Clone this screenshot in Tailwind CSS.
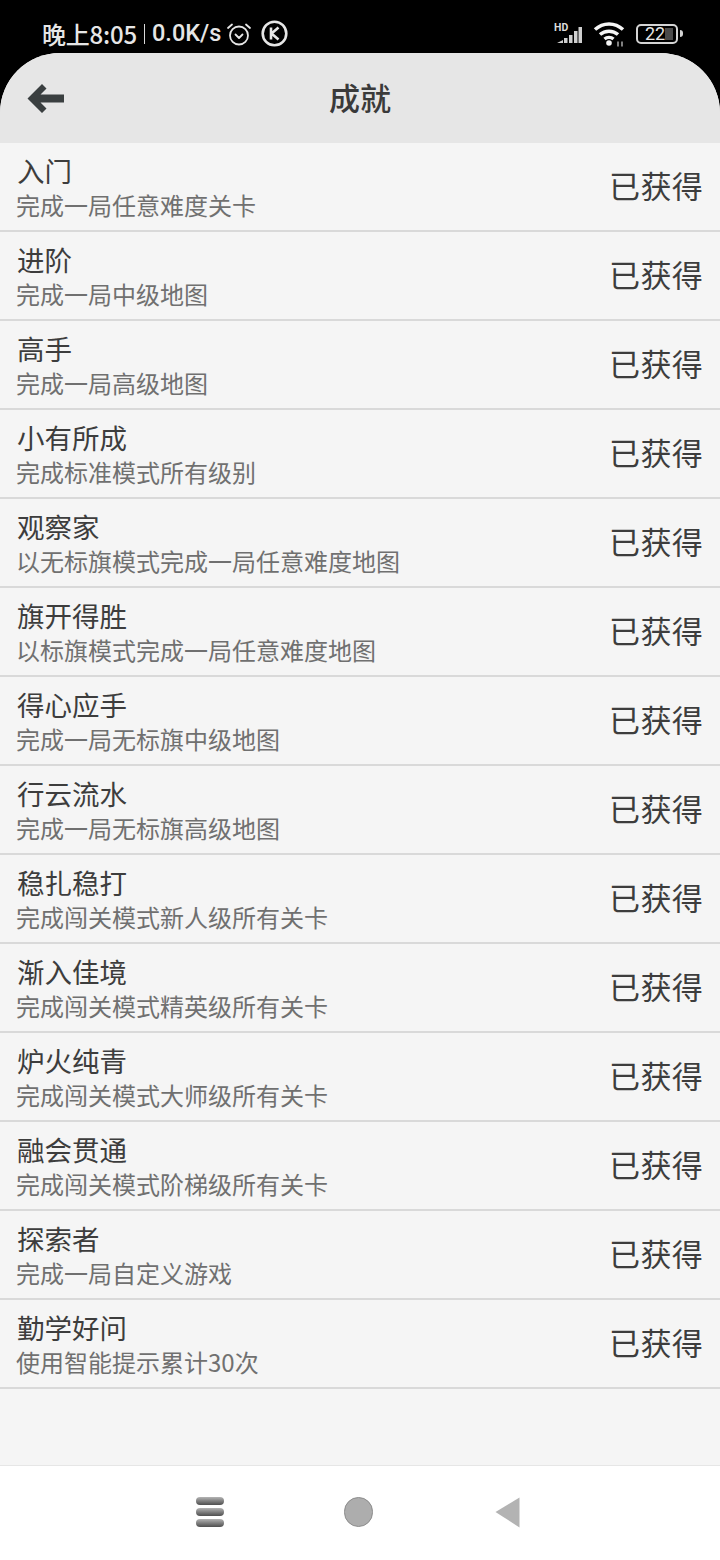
<!DOCTYPE html>
<html lang="zh">
<head>
    <meta charset="UTF-8">
    <meta name="viewport" content="width=device-width, initial-scale=1.0">
    <title>成就</title>
    <script src="https://cdn.jsdelivr.net/npm/@tailwindcss/browser@4"></script>
</head>
<body class="w-[720px] h-[1560px] overflow-hidden bg-black font-['Roboto','Noto_Sans_CJK_SC',sans-serif]">
    <!-- status bar -->
    <div class="h-[53px] flex items-center justify-between pl-[42px] pr-[37px] pt-[14px] text-[#e6e6e6]">
        <div class="flex items-center text-[23.500px] leading-none">
            <span class="font-['Noto_Sans_CJK_SC',sans-serif] text-[24px] tracking-[-0.2px] font-medium">晚上8:05</span>
            <span class="w-px h-[20px] bg-[#d8d8d8] ml-[7px] mr-[7px]"></span>
            <span class="font-medium">0.0K/s</span>
            <svg class="ml-[5px]" width="26" height="24" viewBox="0 0 26 24" fill="none" stroke="#e6e6e6" stroke-width="1.800" stroke-linecap="round" stroke-linejoin="round">
                <circle cx="13" cy="13.500" r="9"/>
                <path d="M9.500 12.500l3.500 3.500 3.500-3.500"/>
                <path d="M2 6l4-3.500M24 6l-4-3.500"/>
            </svg>
            <svg class="ml-[9px]" width="27" height="27" viewBox="0 0 27 27" fill="none" stroke="#e6e6e6">
                <circle cx="13.500" cy="13.500" r="11.800" stroke-width="2.600"/>
                <path d="M10 7.500v12M17.500 7.500l-7 6 7 6" stroke-width="2.600"/>
            </svg>
        </div>
        <div class="flex items-center">
            <svg width="30" height="24" viewBox="0 0 30 24">
                <text x="0" y="9" font-size="10.500" font-weight="700" font-family="Roboto" fill="#dcdcdc">HD</text>
                <path d="M3 21l6-3v3zM10 16h3.500v5H10zM15 13h3.500v8H15zM20 9h3.500v12H20zM24.500 5H28v16h-3.500z" fill="#cfcfcf"/>
            </svg>
            <svg class="ml-[9px]" width="34" height="26" viewBox="0 0 34 26" fill="none" stroke="#f5f5f5" stroke-width="3.500">
                <path d="M2 8.500C10 1 22 1 30 8.500"/>
                <path d="M7 13.500C12 9 20 9 25 13.500"/>
                <path d="M11.500 18C14 16 18 16 20.500 18"/>
                <circle cx="16" cy="22" r="2.800" fill="#f5f5f5" stroke="none"/>
                <path d="M25 20.500v5M29 20.500v5" stroke-width="1.300" stroke="#c4c4c4"/>
            </svg>
            <div class="ml-[9px] flex items-center">
                <div class="relative w-[42px] h-[20px] rounded-[5px] border-2 border-[#d4d4d4] flex items-center justify-center text-[18px] leading-none text-[#e6e6e6]">
                    <span class="absolute right-[3px] top-[2px] bottom-[2px] w-[8px] bg-[#4a4a4a]"></span>
                    <span class="relative -ml-[4px]">22</span>
                </div>
                <span class="ml-[2px] w-[3px] h-[7px] rounded-r-sm bg-[#d4d4d4]"></span>
            </div>
        </div>
    </div>

    <!-- page -->
    <div class="h-[1412px] rounded-t-[60px] bg-[#f5f5f5] overflow-hidden">
        <header class="relative h-[90px] bg-[#e6e6e6] flex items-center justify-center">
            <svg class="absolute left-[27px] top-[31px]" width="38" height="29" viewBox="0 0 38 29" fill="#3a3f40">
                <path d="M15 0l4.500 4.500-6 6H37v8H13.500l6 6-4.500 4.500L.500 14.500z"/>
            </svg>
            <h1 class="text-[31px] leading-none font-medium text-[#3a3a3a] font-['Noto_Sans_CJK_SC',sans-serif] -mt-[3px]">成就</h1>
        </header>
        <ul class="font-['Noto_Sans_CJK_SC',sans-serif]">
            <li class="h-[89px] border-b-2 border-[#d9d9d9] flex items-center justify-between pl-[16px] pr-[17px]">
                <div><p class="pl-px text-[27.500px] leading-[36px] text-[#3d3d3d]">入门</p><p class="text-[24px] leading-[34px] text-[#707070]">完成一局任意难度关卡</p></div>
                <span class="text-[31px] tracking-[0.3px] -mt-[2px] text-[#3d3d3d]">已获得</span>
            </li>
            <li class="h-[89px] border-b-2 border-[#d9d9d9] flex items-center justify-between pl-[16px] pr-[17px]">
                <div><p class="pl-px text-[27.500px] leading-[36px] text-[#3d3d3d]">进阶</p><p class="text-[24px] leading-[34px] text-[#707070]">完成一局中级地图</p></div>
                <span class="text-[31px] tracking-[0.3px] -mt-[2px] text-[#3d3d3d]">已获得</span>
            </li>
            <li class="h-[89px] border-b-2 border-[#d9d9d9] flex items-center justify-between pl-[16px] pr-[17px]">
                <div><p class="pl-px text-[27.500px] leading-[36px] text-[#3d3d3d]">高手</p><p class="text-[24px] leading-[34px] text-[#707070]">完成一局高级地图</p></div>
                <span class="text-[31px] tracking-[0.3px] -mt-[2px] text-[#3d3d3d]">已获得</span>
            </li>
            <li class="h-[89px] border-b-2 border-[#d9d9d9] flex items-center justify-between pl-[16px] pr-[17px]">
                <div><p class="pl-px text-[27.500px] leading-[36px] text-[#3d3d3d]">小有所成</p><p class="text-[24px] leading-[34px] text-[#707070]">完成标准模式所有级别</p></div>
                <span class="text-[31px] tracking-[0.3px] -mt-[2px] text-[#3d3d3d]">已获得</span>
            </li>
            <li class="h-[89px] border-b-2 border-[#d9d9d9] flex items-center justify-between pl-[16px] pr-[17px]">
                <div><p class="pl-px text-[27.500px] leading-[36px] text-[#3d3d3d]">观察家</p><p class="text-[24px] leading-[34px] text-[#707070]">以无标旗模式完成一局任意难度地图</p></div>
                <span class="text-[31px] tracking-[0.3px] -mt-[2px] text-[#3d3d3d]">已获得</span>
            </li>
            <li class="h-[89px] border-b-2 border-[#d9d9d9] flex items-center justify-between pl-[16px] pr-[17px]">
                <div><p class="pl-px text-[27.500px] leading-[36px] text-[#3d3d3d]">旗开得胜</p><p class="text-[24px] leading-[34px] text-[#707070]">以标旗模式完成一局任意难度地图</p></div>
                <span class="text-[31px] tracking-[0.3px] -mt-[2px] text-[#3d3d3d]">已获得</span>
            </li>
            <li class="h-[89px] border-b-2 border-[#d9d9d9] flex items-center justify-between pl-[16px] pr-[17px]">
                <div><p class="pl-px text-[27.500px] leading-[36px] text-[#3d3d3d]">得心应手</p><p class="text-[24px] leading-[34px] text-[#707070]">完成一局无标旗中级地图</p></div>
                <span class="text-[31px] tracking-[0.3px] -mt-[2px] text-[#3d3d3d]">已获得</span>
            </li>
            <li class="h-[89px] border-b-2 border-[#d9d9d9] flex items-center justify-between pl-[16px] pr-[17px]">
                <div><p class="pl-px text-[27.500px] leading-[36px] text-[#3d3d3d]">行云流水</p><p class="text-[24px] leading-[34px] text-[#707070]">完成一局无标旗高级地图</p></div>
                <span class="text-[31px] tracking-[0.3px] -mt-[2px] text-[#3d3d3d]">已获得</span>
            </li>
            <li class="h-[89px] border-b-2 border-[#d9d9d9] flex items-center justify-between pl-[16px] pr-[17px]">
                <div><p class="pl-px text-[27.500px] leading-[36px] text-[#3d3d3d]">稳扎稳打</p><p class="text-[24px] leading-[34px] text-[#707070]">完成闯关模式新人级所有关卡</p></div>
                <span class="text-[31px] tracking-[0.3px] -mt-[2px] text-[#3d3d3d]">已获得</span>
            </li>
            <li class="h-[89px] border-b-2 border-[#d9d9d9] flex items-center justify-between pl-[16px] pr-[17px]">
                <div><p class="pl-px text-[27.500px] leading-[36px] text-[#3d3d3d]">渐入佳境</p><p class="text-[24px] leading-[34px] text-[#707070]">完成闯关模式精英级所有关卡</p></div>
                <span class="text-[31px] tracking-[0.3px] -mt-[2px] text-[#3d3d3d]">已获得</span>
            </li>
            <li class="h-[89px] border-b-2 border-[#d9d9d9] flex items-center justify-between pl-[16px] pr-[17px]">
                <div><p class="pl-px text-[27.500px] leading-[36px] text-[#3d3d3d]">炉火纯青</p><p class="text-[24px] leading-[34px] text-[#707070]">完成闯关模式大师级所有关卡</p></div>
                <span class="text-[31px] tracking-[0.3px] -mt-[2px] text-[#3d3d3d]">已获得</span>
            </li>
            <li class="h-[89px] border-b-2 border-[#d9d9d9] flex items-center justify-between pl-[16px] pr-[17px]">
                <div><p class="pl-px text-[27.500px] leading-[36px] text-[#3d3d3d]">融会贯通</p><p class="text-[24px] leading-[34px] text-[#707070]">完成闯关模式阶梯级所有关卡</p></div>
                <span class="text-[31px] tracking-[0.3px] -mt-[2px] text-[#3d3d3d]">已获得</span>
            </li>
            <li class="h-[89px] border-b-2 border-[#d9d9d9] flex items-center justify-between pl-[16px] pr-[17px]">
                <div><p class="pl-px text-[27.500px] leading-[36px] text-[#3d3d3d]">探索者</p><p class="text-[24px] leading-[34px] text-[#707070]">完成一局自定义游戏</p></div>
                <span class="text-[31px] tracking-[0.3px] -mt-[2px] text-[#3d3d3d]">已获得</span>
            </li>
            <li class="h-[89px] border-b-2 border-[#d9d9d9] flex items-center justify-between pl-[16px] pr-[17px]">
                <div><p class="pl-px text-[27.500px] leading-[36px] text-[#3d3d3d]">勤学好问</p><p class="text-[24px] leading-[34px] text-[#707070]">使用智能提示累计30次</p></div>
                <span class="text-[31px] tracking-[0.3px] -mt-[2px] text-[#3d3d3d]">已获得</span>
            </li>
        </ul>
    </div>

    <!-- nav bar -->
    <nav class="h-[95px] bg-white border-t border-[#e6e6e6] relative">
        <div class="absolute left-[196px] top-[31px] w-[28px] flex flex-col gap-[3px]">
            <span class="h-[8px] rounded-full bg-gradient-to-b from-[#b5b5b5] to-[#4f4f4f]"></span>
            <span class="h-[8px] rounded-full bg-gradient-to-b from-[#b5b5b5] to-[#4f4f4f]"></span>
            <span class="h-[8px] rounded-full bg-gradient-to-b from-[#b5b5b5] to-[#4f4f4f]"></span>
        </div>
        <div class="absolute left-[344px] top-[31px] w-[29px] h-[30px] rounded-full bg-[#adadad] border border-[#8c8c8c]"></div>
        <svg class="absolute left-[495px] top-[31px]" width="26" height="31" viewBox="0 0 26 31"><path d="M24.500 .500v30L.500 15z" fill="#b3b3b3"/></svg>
    </nav>
</body>
</html>
